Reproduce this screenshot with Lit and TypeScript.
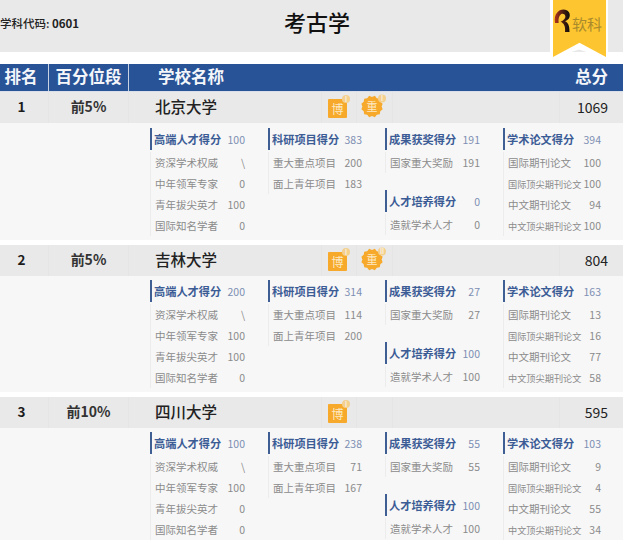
import { LitElement, html, css, svg } from "lit";
import { customElement } from "lit/decorators.js";

type Item = [string, string, boolean?];
type Block = { title: string; score: string; items: Item[] };
type Uni = { rank: string; pct: string; name: string; total: string; bo: string; zhong?: string; cols: Block[][] };

const talent = (t: string, a: string, b: string, c: string, d: string): Block => ({
  title: "高端人才得分", score: t,
  items: [["资深学术权威", a], ["中年领军专家", b], ["青年拔尖英才", c], ["国际知名学者", d]],
});
const research = (t: string, a: string, b: string): Block => ({
  title: "科研项目得分", score: t, items: [["重大重点项目", a], ["面上青年项目", b]],
});
const award = (t: string, a: string): Block => ({ title: "成果获奖得分", score: t, items: [["国家重大奖励", a]] });
const train = (t: string, a: string): Block => ({ title: "人才培养得分", score: t, items: [["造就学术人才", a]] });
const paper = (t: string, a: string, b: string, c: string, d: string): Block => ({
  title: "学术论文得分", score: t,
  items: [["国际期刊论文", a], ["国际顶尖期刊论文", b, true], ["中文期刊论文", c], ["中文顶尖期刊论文", d, true]],
});

const DATA: Uni[] = [
  { rank: "1", pct: "前5%", name: "北京大学", total: "1069", bo: "I", zhong: "I",
    cols: [[talent("100", "\\", "0", "100", "0")], [research("383", "200", "183")], [award("191", "191"), train("0", "0")], [paper("394", "100", "100", "94", "100")]] },
  { rank: "2", pct: "前5%", name: "吉林大学", total: "804", bo: "I", zhong: "II",
    cols: [[talent("200", "\\", "100", "100", "0")], [research("314", "114", "200")], [award("27", "27"), train("100", "100")], [paper("163", "13", "16", "77", "58")]] },
  { rank: "3", pct: "前10%", name: "四川大学", total: "595", bo: "I",
    cols: [[talent("100", "\\", "100", "0", "0")], [research("238", "71", "167")], [award("55", "55"), train("100", "100")], [paper("103", "9", "4", "55", "34")]] },
];

const scallop = (() => {
  const pts: string[] = [];
  for (let i = 0; i < 24; i++) {
    const r = i % 2 ? 11 : 9.6;
    const a = (i / 24) * Math.PI * 2;
    pts.push(`${(11 + r * Math.cos(a)).toFixed(2)},${(12.5 + r * Math.sin(a)).toFixed(2)}`);
  }
  return pts.join(" ");
})();

@customElement("app-root")
export class AppRoot extends LitElement {
  static styles = css`
    :host {
      display: block;
      width: 623px;
      height: 540px;
      overflow: hidden;
      background: #fff;
      font-family: "Noto Sans CJK SC", "Noto Sans", sans-serif;
    }
    .top {
      position: relative;
      height: 52px;
      background: #e9e9e9;
      display: grid;
      grid-template-columns: 1fr auto 1fr;
      align-items: center;
    }
    .code { font-size: 11.5px; font-weight: 500; color: #222; padding-bottom: 6px; }
    .code b { font-weight: 700; }
    .heading { font-size: 22px; font-weight: 500; color: #111; line-height: 40px; padding: 0 0 11px 11px; }
    .ribbon {
      position: absolute;
      left: 550px;
      top: 0;
      width: 58px;
      height: 59px;
      background: #fff;
      clip-path: polygon(0 0, 100% 0, 100% 100%, 50% 84%, 0 100%);
    }
    .ribbon-in {
      position: absolute;
      left: 3px;
      top: 0;
      width: 53px;
      height: 57px;
      background: #fdc52f;
      clip-path: polygon(0 0, 100% 0, 100% 100%, 50% 75%, 0 100%);
      display: flex;
      align-items: flex-start;
      padding: 8px 0 0 0;
      box-sizing: border-box;
    }
    .ribbon svg { flex: none; }
    .ribbon span { font-size: 15px; line-height: 24px; color: #a98a2c; margin-top: 4px; white-space: nowrap; }

    .thead {
      margin-top: 12px;
      height: 27px;
      background: #285397;
      border-bottom: 1px solid #d9e0ea;
      color: #f4f6fa;
      font-size: 16.5px;
      font-weight: 700;
      line-height: 24px;
      display: grid;
      grid-template-columns: 49px 80px 1fr 80px;
    }
    .thead > div { text-align: center; }
    .thead .sep { border-right: 1px solid #c7d2e2; }
    .thead .first { padding-right: 6px; box-sizing: border-box; }
    .thead .nm { text-align: left; padding-left: 29px; }
    .thead .tt { text-align: right; padding-right: 15px; }

    .row {
      height: 31px;
      background: #e9e9e9;
      display: grid;
      grid-template-columns: 49px 80px 193px 35px 36px 167px 1fr;
      align-items: center;
      color: #1c1c1c;
    }
    .row > div { height: 100%; display: flex; align-items: center; box-sizing: border-box; border-right: 1px solid #e5e5e5; }
    .row > div:last-child { border-right: none; }
    .rank { justify-content: center; font-size: 13.5px; font-weight: 700; padding: 0 5px 3px 0; }
    .pct { justify-content: center; font-size: 14px; font-weight: 700; color: #333; padding-bottom: 3px; }
    .name { font-size: 15.5px; font-weight: 500; padding: 0 0 3px 26px; color: #222; }
    .ic { justify-content: center; position: relative; padding: 0 1px 3px 0; }
    .tot { justify-content: flex-end; font-size: 14px; padding: 0 15px 2px 0; color: #222; }
    .ic svg { display: block; }

    .detail {
      height: 116px;
      margin-bottom: 5px;
      background: #f7f7f7;
      padding: 4px 0 0 150px;
      box-sizing: border-box;
      display: grid;
      grid-template-columns: 118px 117px 118px 120px;
      align-content: start;
      align-items: start;
    }
    .detail.lead { height: 117px; padding-top: 5px; }
    .block + .block { margin-top: 17px; }
    .bt {
      height: 22px;
      display: flex;
      align-items: center;
      justify-content: space-between;
      border-left: 2px solid #3f5f94;
      padding-left: 2px;
      margin-right: 23px;
      margin-bottom: 2px;
      font-size: 11.2px;
      white-space: nowrap;
    }
    .col:last-child .bt, .col:last-child .it { margin-right: 22px; }
    .bt b { color: #3c5c96; font-weight: 700; }
    .bt i { font-style: normal; font-size: 10.5px; color: #7d8fb3; }
    .it {
      height: 21px;
      display: flex;
      align-items: center;
      justify-content: space-between;
      border-left: 1px solid #ececec;
      padding-left: 4px;
      margin-right: 23px;
      font-size: 10.5px;
      color: #8b8b8b;
      white-space: nowrap;
    }
    .it.small span:first-child { font-size: 9.2px; }
  `;

  private bo(mark: string) {
    return html`<svg width="24" height="24" viewBox="0 0 24 24" aria-hidden="true">
      <rect x="1" y="5" width="19" height="19" rx="1" fill="#f6a92b"></rect>
      <circle cx="19" cy="5" r="4" fill="#f3d08e"></circle>
      <text x="19" y="7.5" font-size="7" text-anchor="middle" fill="#fff">${mark}</text>
      <text x="10.5" y="19.5" font-size="12" text-anchor="middle" fill="#fde9c4">博</text>
    </svg>`;
  }

  private zhong(mark: string) {
    return html`<svg width="26" height="24" viewBox="0 0 26 24" aria-hidden="true">
      ${svg`<polygon points=${scallop} fill="#f6a92b"></polygon>`}
      <circle cx="21" cy="4.5" r="4" fill="#f3d08e"></circle>
      <text x="21" y="7" font-size="7" text-anchor="middle" fill="#fff">${mark}</text>
      <text x="11" y="17" font-size="11" text-anchor="middle" fill="#fde9c4">重</text>
    </svg>`;
  }

  render() {
    return html`
      <div class="top">
        <div class="code">学科代码: <b>0601</b></div>
        <div class="heading">考古学</div>
        <div></div>
        <div class="ribbon"><div class="ribbon-in">
          <svg width="19" height="25" viewBox="0 0 19 25" aria-hidden="true">
            <defs>
              <linearGradient id="rg" x1="0" y1="0" x2="1" y2="0">
                <stop offset="0" stop-color="#b2331c"></stop>
                <stop offset="0.55" stop-color="#4a1c10"></stop>
                <stop offset="1" stop-color="#0d0d0d"></stop>
              </linearGradient>
            </defs>
            <path d="M2 15 C0.5 6 5.5 1.5 10.5 1.5 C15.5 1.5 17.5 5.5 16.5 9 C16 11 14.2 12.6 12 13.2 C15 14.5 16.5 17 16.5 24 L12 24 C12.5 18 11 15.3 7.5 13.8 C10.5 12.5 12.8 10.5 12.3 8 C11.8 5.8 9.5 5.2 8 6.2 C5.8 7.6 5.2 11 5.6 15 Z" fill="url(#rg)"></path>
          </svg>
          <span>软科</span>
        </div></div>
      </div>
      <div class="thead">
        <div class="sep first">排名</div>
        <div class="sep">百分位段</div>
        <div class="nm">学校名称</div>
        <div class="tt">总分</div>
      </div>
      ${DATA.map((u, idx) => html`
        <div class="row">
          <div class="rank">${u.rank}</div>
          <div class="pct">${u.pct}</div>
          <div class="name">${u.name}</div>
          <div class="ic">${this.bo(u.bo)}</div>
          <div class="ic">${u.zhong ? this.zhong(u.zhong) : ""}</div>
          <div></div>
          <div class="tot">${u.total}</div>
        </div>
        <div class="detail ${idx === 0 ? "lead" : ""}">
          ${u.cols.map((col) => html`<div class="col">
            ${col.map((b) => html`<div class="block">
              <div class="bt"><b>${b.title}</b><i>${b.score}</i></div>
              ${b.items.map((it) => html`<div class="it ${it[2] ? "small" : ""}"><span>${it[0]}</span><span>${it[1]}</span></div>`)}
            </div>`)}
          </div>`)}
        </div>
      `)}
    `;
  }
}
